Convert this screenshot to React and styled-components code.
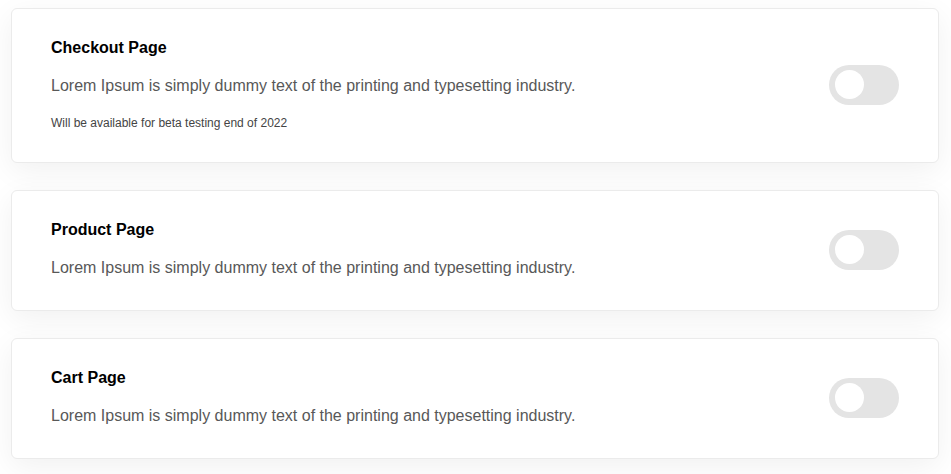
import { useState } from 'react';
import styled, { createGlobalStyle } from 'styled-components';

const GlobalStyle = createGlobalStyle`
  html, body {
    margin: 0;
    padding: 0;
    background: #ffffff;
    font-family: 'Liberation Sans', Arial, sans-serif;
  }
`;

const StyledList = styled.div`
  display: flex;
  flex-direction: column;
  gap: 27px;
  padding: 8px 12px 16px 11px;
`;

const StyledCard = styled.div`
  display: flex;
  align-items: flex-start;
  justify-content: space-between;
  padding: 30px 39px 32px 39px;
  background-color: #ffffff;
  border: 1px solid #ebebeb;
  border-radius: 6px;
  box-shadow: 0 8px 30px rgba(0, 0, 0, 0.06);

  .info {
    display: flex;
    flex-direction: column;
  }
`;

const StyledTitle = styled.h3`
  margin: 0;
  font-size: 16px;
  line-height: 18px;
  font-weight: 700;
  color: #000000;
`;

const StyledDesc = styled.p`
  margin: 19px 0 0;
  font-size: 16px;
  line-height: 20px;
  color: #585858;
`;

const StyledNote = styled.p`
  margin: 21px 0 0;
  font-size: 12px;
  line-height: 13px;
  color: #444444;
`;

const StyledToggle = styled.button`
  position: relative;
  align-self: center;
  flex-shrink: 0;
  width: 70px;
  height: 40px;
  border: none;
  border-radius: 20px;
  padding: 0;
  cursor: pointer;
  background-color: ${(props) => (props.$on ? '#4caf50' : '#e4e4e4')};
  transition: background-color 0.2s;

  &::after {
    content: '';
    position: absolute;
    top: 5.5px;
    left: ${(props) => (props.$on ? '35.5px' : '5.5px')};
    width: 29px;
    height: 29px;
    border-radius: 50%;
    background-color: #ffffff;
    transition: left 0.2s;
  }
`;

const pages = [
  {
    title: 'Checkout Page',
    note: 'Will be available for beta testing end of 2022',
  },
  { title: 'Product Page' },
  { title: 'Cart Page' },
];

const Card = ({ title, note }) => {
  const [on, setOn] = useState(false);
  return (
    <StyledCard>
      <div className="info">
        <StyledTitle>{title}</StyledTitle>
        <StyledDesc>
          Lorem Ipsum is simply dummy text of the printing and typesetting
          industry.
        </StyledDesc>
        {note && <StyledNote>{note}</StyledNote>}
      </div>
      <StyledToggle $on={on} onClick={() => setOn(!on)} />
    </StyledCard>
  );
};

const App = () => {
  return (
    <>
      <GlobalStyle />
      <StyledList>
        {pages.map((page) => (
          <Card key={page.title} title={page.title} note={page.note} />
        ))}
      </StyledList>
    </>
  );
};

export default App;
